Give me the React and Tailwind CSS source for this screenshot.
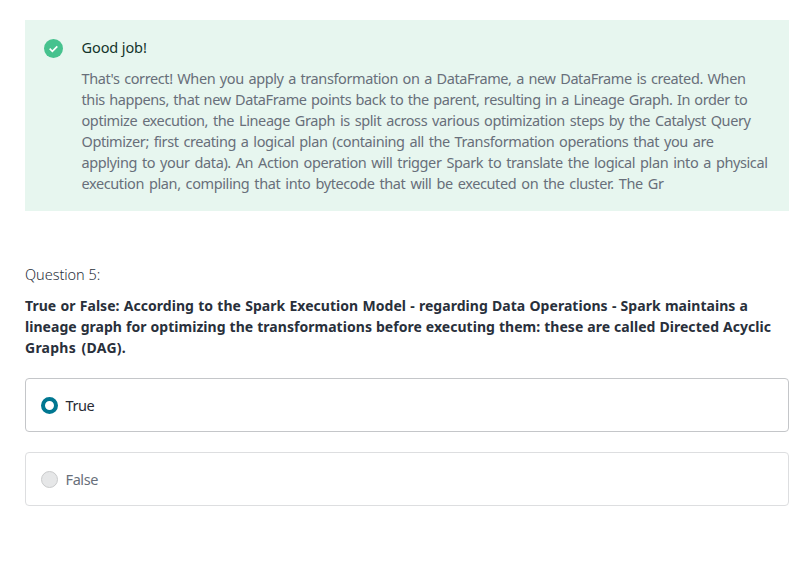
const feedback = [
  ["That's correct! When you apply a transformation on a DataFrame, a new DataFrame is created. When", "w-[664px]"],
  ["this happens, that new DataFrame points back to the parent, resulting in a Lineage Graph. In order to", "w-[666px]"],
  ["optimize execution, the Lineage Graph is split across various optimization steps by the Catalyst Query", "w-[669px]"],
  ["Optimizer; first creating a logical plan (containing all the Transformation operations that you are", "w-[632px]"],
  ["applying to your data). An Action operation will trigger Spark to translate the logical plan into a physical", "w-[686px]"],
  ["execution plan, compiling that into bytecode that will be executed on the cluster. The Gr", "w-[582px]"],
];

const question = [
  ["True or False: According to the Spark Execution Model - regarding Data Operations - Spark maintains a", "w-[723px]"],
  ["lineage graph for optimizing the transformations before executing them: these are called Directed Acyclic", "w-[746px]"],
  ["Graphs (DAG).", "w-[101px] tracking-[0.25px]"],
];

function Lines({ lines }) {
  return lines.map(([text, width]) => (
    <span key={text} className={`block whitespace-nowrap [text-align-last:justify] ${width}`}>
      {text}
    </span>
  ));
}

function Option({ label, checked }) {
  return (
    <label
      className={`flex h-[54px] items-center rounded border px-[15px] ${
        checked ? "border-[#c4c6c9] text-[#282b35]" : "border-[#dddee0] text-[#686f7a]"
      }`}
    >
      <span
        className={`size-[17px] shrink-0 rounded-full ${
          checked ? "border-[4.5px] border-[#007791] bg-white" : "border border-[#cacbcc] bg-[#e6e7e8]"
        }`}
      />
      <span className="ml-[7.5px]">{label}</span>
    </label>
  );
}

export default function App() {
  return (
    <main className="h-[582px] bg-white pt-5 pr-[21px] pl-[25px] font-['Noto_Sans',sans-serif] text-[14.5px] leading-[21px] tracking-[-0.4px] text-[#29303b]">
      <section className="flex h-[191px] bg-[#e7f6ef] pt-[17px] pl-[19px]">
        <svg className="mt-[2px] size-[19px] shrink-0" viewBox="0 0 18 18" fill="none">
          <circle cx="9" cy="9" r="9" fill="#46c28e" />
          <path d="M5.4 9.2 7.9 11.6 12.6 6.9" stroke="white" strokeWidth="1.6" />
        </svg>
        <div className="ml-[18.5px]">
          <h2 className="tracking-[-0.1px] text-[#14342b]">Good job!</h2>
          <p className="mt-[10px] text-[#686f7a]">
            <Lines lines={feedback} />
          </p>
        </div>
      </section>
      <section className="pt-[53px]">
        <p className="font-light tracking-[-0.05px]">Question 5:</p>
        <p className="mt-[10px] text-[14px] font-bold tracking-[0.04px]">
          <Lines lines={question} />
        </p>
        <div className="mt-5 flex flex-col gap-5">
          <Option label="True" checked />
          <Option label="False" />
        </div>
      </section>
    </main>
  );
}
